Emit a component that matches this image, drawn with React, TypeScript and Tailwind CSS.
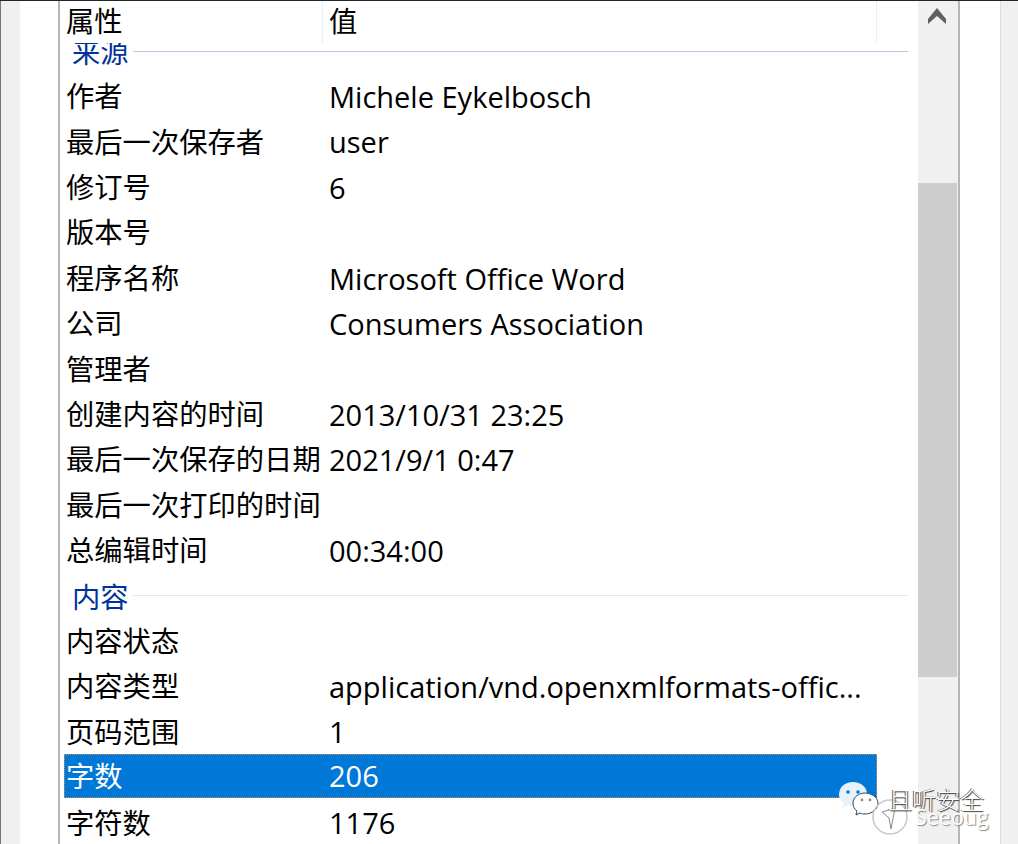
const font = "font-['Open_Sans','Noto_Sans_CJK_SC',sans-serif]";

type Row = { name: string; value?: string; selected?: boolean; group?: boolean; faint?: boolean };

const rows: Row[] = [
  { name: "来源", group: true },
  { name: "作者", value: "Michele Eykelbosch" },
  { name: "最后一次保存者", value: "user" },
  { name: "修订号", value: "6" },
  { name: "版本号" },
  { name: "程序名称", value: "Microsoft Office Word" },
  { name: "公司", value: "Consumers Association" },
  { name: "管理者" },
  { name: "创建内容的时间", value: "2013/10/31 23:25" },
  { name: "最后一次保存的日期", value: "2021/9/1 0:47" },
  { name: "最后一次打印的时间" },
  { name: "总编辑时间", value: "00:34:00" },
  { name: "内容", group: true, faint: true },
  { name: "内容状态" },
  { name: "内容类型", value: "application/vnd.openxmlformats-offic..." },
  { name: "页码范围", value: "1" },
  { name: "字数", value: "206", selected: true },
  { name: "字符数", value: "1176" },
];

const GroupRow = ({ row }: { row: Row }) => (
  <div className="flex h-[45.4px] w-[844px] items-center pl-[8px]">
    <span className="text-[28.3px] leading-none text-[#003399]">{row.name}</span>
    <div className={`-mt-[2px] ml-[4px] h-px flex-1 ${row.faint ? "bg-[#e3e9f2]" : "bg-[#b9c4de]"}`} />
  </div>
);

const DataRow = ({ row }: { row: Row }) => (
  <div className="h-[45.4px] w-[813px]">
    <div
      className={`flex items-center leading-none ${
        row.selected
          ? "-mt-[1.5px] h-[43.5px] bg-[#0078d7] text-white outline-1 outline-dotted outline-[#d98a4a] -outline-offset-1"
          : "h-[43.5px] text-black"
      }`}
    >
      <span className="w-[265px] shrink-0 pl-[2px] text-[28.3px] whitespace-nowrap">{row.name}</span>
      <span className="text-[29px] whitespace-nowrap">{row.value}</span>
    </div>
  </div>
);

const Watermark = () => (
  <div className="absolute top-[778px] left-[838px] flex h-[60px] w-[160px]">
    <svg width="160" height="60" viewBox="0 0 160 60" className="absolute top-0 left-0">
      <path d="M1 16c0-8 6-13 14-13s14 5 14 12c-7 1-13 5-14 12-2 0-3 0-5-1l-6 3 2-5c-3-2-5-5-5-8z" fill="#e6f2fb" />
      <circle cx="10" cy="13" r="1.8" fill="#0078d7" />
      <circle cx="20" cy="13" r="1.8" fill="#0078d7" />
      <path d="M15 24c0-6 6-10 12-10s13 4 13 10-6 11-13 11c-2 0-3 0-5-1l-4 2 1-4c-3-2-4-5-4-8z" fill="#fff" stroke="#33475b" strokeWidth="1" />
      <circle cx="24" cy="21" r="1.4" fill="#8a8a8a" />
      <circle cx="32" cy="21" r="1.4" fill="#8a8a8a" />
      <circle cx="52" cy="38" r="17" fill="none" stroke="#c8c8c8" strokeWidth="1.5" />
      <path d="M44 33l13-4-4 21-2-11z" fill="#fff" stroke="#8a8a8a" strokeWidth="1" />
    </svg>
    <span className="absolute top-[9px] left-[50px] text-[24px] leading-none font-light whitespace-nowrap text-white [text-shadow:1px_1px_1px_#333,-1px_0_0_#555]">
      且听安全
    </span>
    <span className="absolute top-[27px] left-[77px] text-[21.5px] leading-none whitespace-nowrap text-white [text-shadow:1px_1px_1px_#888]">
      Seeoug
    </span>
  </div>
);

export default function App() {
  return (
    <div className={`relative flex h-[844px] w-[1018px] overflow-hidden border-t border-[#20262e] bg-white ${font}`}>
      <div className="h-full w-[20px] shrink-0 border-l border-[#777] bg-[#f0f0f0]" />
      <div className="h-full w-[38px] shrink-0 bg-white" />

      <div className="flex h-full w-[860px] shrink-0 flex-col overflow-hidden border-l-2 border-[#b5b5bd] pl-[4px]">
        <div className="relative z-10 flex h-[42px] w-[813px] shrink-0 items-center bg-white text-[28.3px] leading-none text-black">
          <span className="-mt-[1px] w-[258px] shrink-0 pl-[2px]">属性</span>
          <span className="h-full w-px bg-[#eeeeee]" />
          <span className="-mt-[1px] flex-1 pl-[6px]">值</span>
          <span className="h-full w-px bg-[#eeeeee]" />
        </div>
        <div className="mt-[-13.7px] flex flex-col">
          {rows.map((row) =>
            row.group ? <GroupRow key={row.name} row={row} /> : <DataRow key={row.name} row={row} />
          )}
        </div>
      </div>

      <div className="flex h-full w-[40px] shrink-0 flex-col bg-[#f0f0f0]">
        <div className="flex h-[182px] justify-center pt-[6px] pr-[2px]">
          <svg width="20" height="18" viewBox="0 0 20 18" className="shrink-0">
            <path d="M1 17V12L10 1L19 12V17L10 9Z" fill="#606060" />
          </svg>
        </div>
        <div className="h-[494px] w-[39px] bg-[#cdcdcd]" />
      </div>

      <div className="h-full w-[2px] shrink-0 bg-[#b5b5bd]" />
      <div className="h-full w-[40px] shrink-0 bg-white" />
      <div className="h-full flex-1 border-l border-[#dcdcdc] bg-[#f0f0f0]" />

      <Watermark />
    </div>
  );
}
